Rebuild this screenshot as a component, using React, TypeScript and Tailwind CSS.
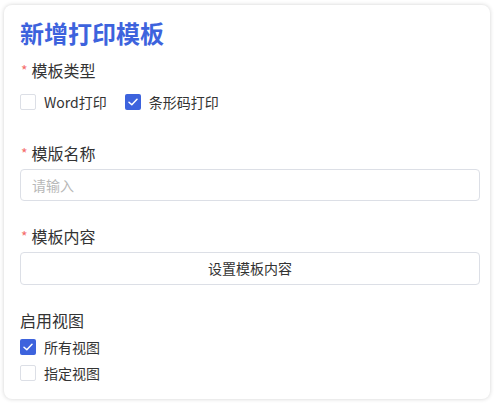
import React from "react";

const font = { fontFamily: '"Noto Sans CJK SC", "Noto Sans", sans-serif' };

function Check({ checked }: { checked: boolean }) {
  return checked ? (
    <span className="flex h-4 w-4 shrink-0 items-center justify-center rounded-[2px] bg-[#3d63dd]">
      <svg width="10" height="8" viewBox="0 0 10 8" fill="none">
        <path d="M1 4.2 L3.8 6.8 L9 1.2" stroke="white" strokeWidth="1.5" strokeLinecap="round" strokeLinejoin="round" />
      </svg>
    </span>
  ) : (
    <span className="h-4 w-4 shrink-0 rounded-[2px] border border-[#dcdfe6] bg-white" />
  );
}

function Label({ text, required }: { text: string; required?: boolean }) {
  return (
    <div className="flex items-center h-[22px] text-[16px] leading-[22px] text-[#333]">
      {required && <span className="text-[#f56c6c] text-[14px] mr-[4px] ml-[1px]">*</span>}
      {text}
    </div>
  );
}

export default function App() {
  return (
    <div className="w-[494px] h-[404px] bg-white p-[4px] pt-[5px]" style={font}>
      <div className="w-[486px] h-[394px] rounded-[8px] bg-white shadow-[0_0_4px_rgba(0,0,0,0.18)] pl-[16px] pr-[10px] pt-[12px]">
        <div className="text-[24px] leading-[32px] font-bold text-[#3d63dd]">新增打印模板</div>
        <div className="mt-[10px]">
          <Label text="模板类型" required />
          <div className="mt-[5px] flex h-[32px] items-center text-[14px] text-[#333]">
            <Check checked={false} />
            <span className="ml-[8px]">Word打印</span>
            <span className="ml-[18px]"><Check checked={true} /></span>
            <span className="ml-[8px]">条形码打印</span>
          </div>
        </div>
        <div className="mt-[24px]">
          <Label text="模版名称" required />
          <div className="mt-[5px] flex h-[32px] items-center rounded-[4px] border border-[#dcdfe6] px-[11px] text-[14px] text-[#b8b8b8]">
            请输入
          </div>
        </div>
        <div className="mt-[24px]">
          <Label text="模板内容" required />
          <div className="mt-[5px] flex h-[33px] items-center justify-center rounded-[4px] border border-[#dcdfe6] text-[14px] text-[#333]">
            设置模板内容
          </div>
        </div>
        <div className="mt-[24px]">
          <Label text="启用视图" />
          <div className="mt-[3px] flex h-[26px] items-center text-[14px] text-[#333]">
            <Check checked={true} />
            <span className="ml-[8px]">所有视图</span>
          </div>
          <div className="flex h-[26px] items-center text-[14px] text-[#333]">
            <Check checked={false} />
            <span className="ml-[8px]">指定视图</span>
          </div>
        </div>
      </div>
    </div>
  );
}
